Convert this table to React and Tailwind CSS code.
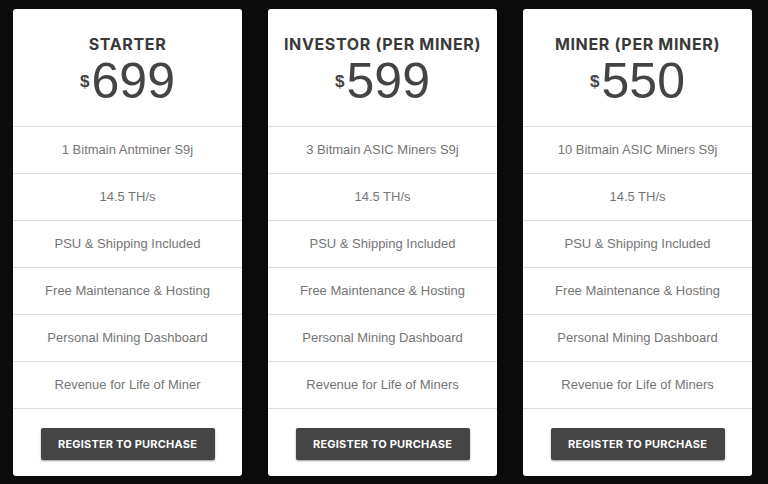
const PLANS = [
  {
    name: "STARTER",
    price: "699",
    features: [
      "1 Bitmain Antminer S9j",
      "14.5 TH/s",
      "PSU & Shipping Included",
      "Free Maintenance & Hosting",
      "Personal Mining Dashboard",
      "Revenue for Life of Miner",
    ],
  },
  {
    name: "INVESTOR (PER MINER)",
    price: "599",
    features: [
      "3 Bitmain ASIC Miners S9j",
      "14.5 TH/s",
      "PSU & Shipping Included",
      "Free Maintenance & Hosting",
      "Personal Mining Dashboard",
      "Revenue for Life of Miners",
    ],
  },
  {
    name: "MINER (PER MINER)",
    price: "550",
    features: [
      "10 Bitmain ASIC Miners S9j",
      "14.5 TH/s",
      "PSU & Shipping Included",
      "Free Maintenance & Hosting",
      "Personal Mining Dashboard",
      "Revenue for Life of Miners",
    ],
  },
];

function PlanCard({ plan }) {
  return (
    <div className="w-[229px] bg-white rounded-[3px] flex flex-col">
      {/* Rubrik och pris */}
      <div className="h-[118px] flex flex-col items-center pt-[25px] border-b border-[#dedede]">
        <h3 className="font-['Inter',sans-serif] font-bold text-[16px] leading-[20px] tracking-[0.65px] text-[#3a3a3a]">
          {plan.name}
        </h3>
        <div className="flex items-start text-[#444] font-['Liberation_Sans',sans-serif] mt-[1px]">
          <span className="text-[17px] font-bold mt-[14px] mr-[2px]">$</span>
          <span className="text-[50px] leading-[52px]">{plan.price}</span>
        </div>
      </div>
      {plan.features.map((f) => (
        <div
          key={f}
          className="h-[47px] flex items-center justify-center border-b border-[#dedede] font-['Liberation_Sans',sans-serif] text-[13px] text-[#757575]"
        >
          {f}
        </div>
      ))}
      <div className="flex-1 flex items-center justify-center">
        <button className="w-[174px] h-[32px] mt-[3px] bg-[#444] rounded-[2px] shadow-[0_1px_2px_rgba(0,0,0,0.4)] text-white font-['Inter',sans-serif] font-bold text-[11px] tracking-[0.2px]">
          REGISTER TO PURCHASE
        </button>
      </div>
    </div>
  );
}

export default function App() {
  return (
    <div className="w-[768px] h-[484px] bg-[#0b0b0b] flex gap-[26px] pl-[13px] pt-[9px] pb-[8px]">
      {PLANS.map((p) => (
        <PlanCard key={p.name} plan={p} />
      ))}
    </div>
  );
}
